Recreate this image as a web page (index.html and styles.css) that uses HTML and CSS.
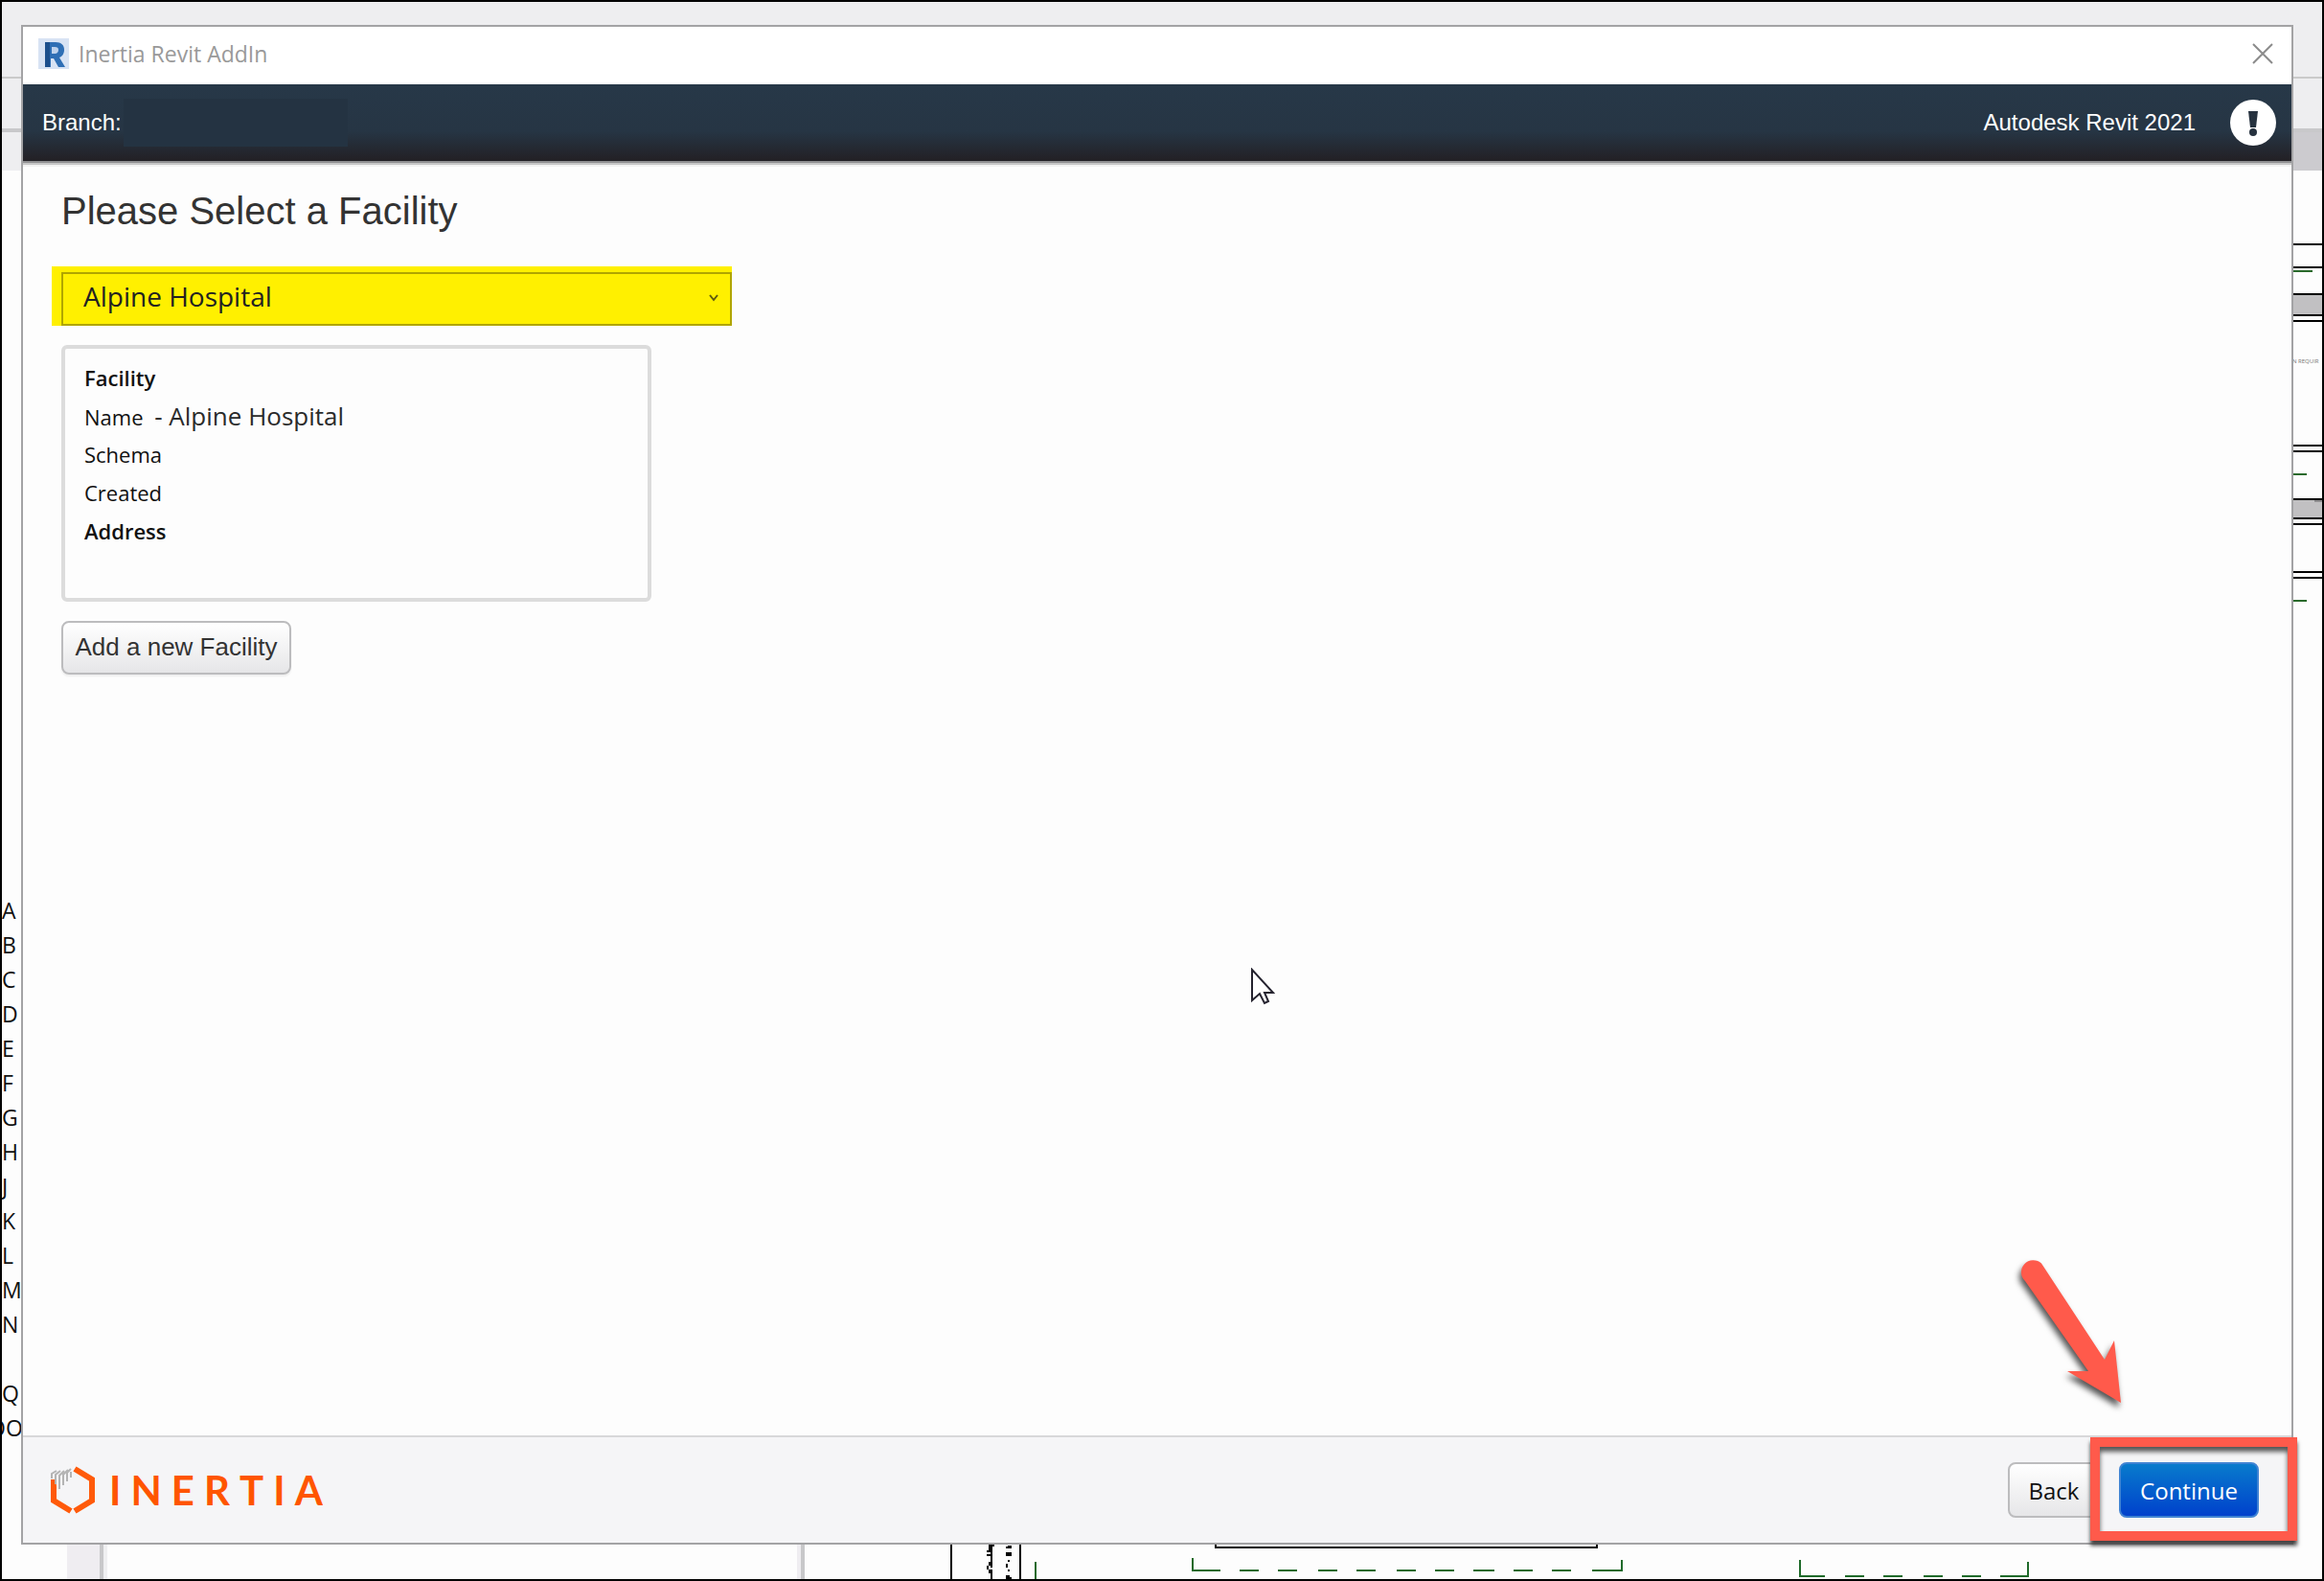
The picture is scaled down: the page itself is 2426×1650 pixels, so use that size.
FILE: index.html
```html
<!DOCTYPE html>
<html lang="en">
<head>
<meta charset="utf-8">
<title>Inertia Revit AddIn</title>
<link rel="stylesheet" href="styles.css">
</head>
<body>
<div class="desktop">
  <div class="ribbon ribbon-top"></div>
  <div class="ribbon ribbon-mid"></div>
  <div class="ribbon ribbon-low"></div>
  <ul class="sheet-list">
    <li>A</li><li>B</li><li>C</li><li>D</li><li>E</li><li>F</li><li>G</li><li>H</li><li>J</li><li>K</li><li>L</li><li>M</li><li>N</li><li></li><li>Q</li><li class="clipped">OO</li>
  </ul>
  <svg class="drawing-right" width="32" height="480" viewBox="0 0 32 480" aria-hidden="true">
    <path fill="#c1c0c2" d="M0 138h32v20H0zM0 352h32v20H0z"/>
    <path fill="#8f8e90" d="M24 352h8v2h-8z"/>
    <path stroke="#000" stroke-width="2" d="M0 85h32M0 109h32M0 137h32M0 159h32M0 165h32M0 295h32M0 301h32M0 351h32M0 371h32M0 377h32M0 427h32M0 433h32"/>
    <path stroke="#2a6a2c" stroke-width="2" d="M0 113h22M0 325h16M0 457h16"/>
    <text class="note" x="1" y="209">N REQUIR</text>
  </svg>
  <svg class="drawing-bottom" width="2422" height="38" viewBox="2 1610 2422 38" aria-hidden="true">
    <path fill="#efedf1" d="M70 1610h34v38H70zM832 1610h4v38h-4z"/>
    <path fill="#c8c8ca" d="M104 1610h4v38h-4zM836 1610h4v38h-4z"/>
    <path fill="#efeff1" d="M108 1610h4v38h-4z"/>
    <path fill="none" stroke="#000" stroke-width="2" d="M993 1610v38M1065 1610v38M1269 1610v5h398v-5"/>
    <path d="M1032 1610h4v2h2v2h-2v12h-2v-8h-2zM1030 1618h4v2h-4zM1030 1622h4v2h-4zM1034 1626h2v8h-2zM1032 1630h2v4h-2zM1030 1634h2v4h-2zM1032 1638h4v10h-2v-6h-2zM1034 1634h2v2h-2z"/>
    <path d="M1050 1610h6v2h-6zM1050 1614h2v2h-2zM1052 1613h4v3h-4zM1050 1620h6v4h-6zM1052 1628h2v2h-2zM1050 1632h2v4h-2zM1052 1638h2v2h-2zM1050 1644h4v2h2v2h-6z"/>
    <path fill="none" stroke="#1f6a2a" stroke-width="2" d="M1081 1630v18M1245 1626v13h29M1294 1639h20M1334 1639h20M1376 1639h20M1416 1639h20M1458 1639h20M1498 1639h20M1538 1639h22M1580 1639h20M1620 1639h20M1662 1639h31v-11M1879 1628v17h26M1926 1645h20M1966 1645h20M2008 1645h20M2048 1645h20M2088 1645h29v-15"/>
  </svg>

  <main class="window">
    <header class="titlebar">
      <svg class="app-icon" width="32" height="32" viewBox="0 0 32 32" aria-hidden="true">
        <path fill="#d8e3f4" d="M0 0h32v32H0z"/>
        <path fill="#2f6fb5" d="M7 4h11c6 0 9 3 9 8 0 4-2 7-5 8l6 10h-7l-5-9h-3v9H7z"/>
        <path fill="#1c4f8c" d="M7 4h5v26H7z"/>
        <path fill="#bfd2ec" d="M14 9h3c3 0 4 1 4 3s-1 4-4 4h-3z"/>
      </svg>
      <span class="title">Inertia Revit AddIn</span>
      <button class="close" aria-label="Close">
        <svg width="22" height="22" viewBox="0 0 22 22"><path d="M1 1l20 20M21 1L1 21" stroke="#8b8b8b" stroke-width="2"/></svg>
      </button>
    </header>
    <div class="navbar">
      <span class="branch">Branch:</span>
      <span class="branch-value"></span>
      <span class="product">Autodesk Revit 2021</span>
      <button class="alert" aria-label="Notifications">
        <svg width="48" height="48" viewBox="0 0 48 48"><circle cx="24" cy="24" r="24" fill="#fff"/><path fill="#26323f" d="M19 12h10l-2 17h-6z"/><circle cx="24" cy="34" r="4" fill="#26323f"/></svg>
      </button>
    </div>
    <section class="content">
      <h1><label for="facility">Please Select a Facility</label></h1>
      <div class="highlight">
        <select id="facility"><option>Alpine Hospital</option></select>
        <svg class="chevron" width="12" height="10" viewBox="0 0 12 10" aria-hidden="true"><path d="M2 2l4 5 4-5" fill="none" stroke="#5f5a10" stroke-width="2"/></svg>
      </div>
      <div class="card">
        <p class="strong">Facility</p>
        <p>Name <span class="facility-name">- Alpine Hospital</span></p>
        <p>Schema</p>
        <p>Created</p>
        <p class="strong">Address</p>
      </div>
      <button class="button add">Add a new Facility</button>
    </section>
    <footer class="footer">
      <div class="brand">
        <svg width="48" height="50" viewBox="0 0 48 50" aria-hidden="true">
          <path fill="none" stroke="#ff5a0a" stroke-width="6" d="M26 3l18 11v22L26 47M22 47L4 36V14"/>
          <path fill="#f5f5f7" d="M6 8h12v8L7 22z"/>
          <path fill="none" stroke="#b4b4b4" stroke-width="2" d="M2 13V8l5-3M6 19V9l5-4M10 24V10l5-5M14 20V9l5-5M18 16V7l4-4M22 12V6"/>
        </svg>
        <span class="wordmark"><i>I</i><i>N</i><i>E</i><i>R</i><i>T</i><i>I</i><i>A</i></span>
      </div>
      <div class="actions">
        <button class="button back">Back</button>
        <div class="callout-anchor">
          <button class="button primary">Continue</button>
          <div class="callout"></div>
          <svg class="arrow" width="130" height="180" viewBox="0 0 130 180" aria-hidden="true">
            <path fill="#ff5a4b" d="M18 30a10 10 0 0 1 17-18.500L101 112l10-20 7 65-56-33h22z"/>
          </svg>
        </div>
      </div>
    </footer>
  </main>
  <svg class="cursor" width="26" height="40" viewBox="0 0 26 40" aria-hidden="true"><path fill="#fff" stroke="#25232f" stroke-width="2" d="M2 2v32l8-7 5 10 4-2-4-9h9z"/></svg>
</div>
</body>
</html>
```
FILE: styles.css
```css
* { box-sizing: border-box; }
body { margin: 0; font-family: "Open Sans", "Noto Sans", sans-serif; font-size: 22px; color: #111; }
button, select { font: inherit; }

.desktop {
  position: relative;
  display: flex;
  flex-direction: column;
  min-height: 100vh;
  padding: 24px 30px 36px 20px;
  border: 2px solid #000;
  background: #fdfdfd;
  overflow: hidden;
}
.ribbon { position: absolute; left: 0; right: 0; background: #eeeef0; }
.ribbon-top { top: 0; height: 80px; border-bottom: 2px solid #cacaca; }
.ribbon-mid { top: 80px; height: 56px; border-bottom: 4px solid #c8c8ca; }
.ribbon-low { top: 132px; height: 44px; background: linear-gradient(90deg, #eeeef0 50%, #cccbcf 50%); border-top: 4px solid #c8c8ca; }
.sheet-list { position: absolute; left: 0; top: 930px; margin: 0; padding: 0; list-style: none; font-size: 23px; line-height: 36px; }
.sheet-list li { height: 36px; }
.sheet-list .clipped { margin-left: -14px; }
.drawing-right { position: absolute; right: 0; top: 168px; }
.note { fill: #777; font-size: 6px; }
.drawing-bottom { position: absolute; left: 0; bottom: 0; }

.window {
  position: relative;
  flex: 1;
  display: flex;
  flex-direction: column;
  border: 2px solid #a3a3a5;
  background: #fdfdfd;
}
.titlebar { display: flex; align-items: center; gap: 10px; height: 60px; padding: 0 19px 4px 16px; background: #fff; }
.title { flex: 1; color: #999; font-size: 23px; line-height: 30px; }
.close, .alert { display: flex; padding: 0; border: 0; background: none; }
.navbar {
  display: flex;
  align-items: center;
  height: 84px;
  padding: 0 16px 2px 20px;
  border-bottom: 2px solid #c6c6c6;
  box-shadow: inset 0 -2px #8f8f91, 0 2px #f2f2f2;
  background: linear-gradient(#273848, #263544 60%, #232126 96%);
  color: #fff;
  font-family: "Liberation Sans", Arial, sans-serif;
  font-size: 24px;
}
.branch-value { width: 234px; height: 50px; margin-left: 2px; background: #243342; }
.product { margin-left: auto; margin-right: 36px; }

.content { flex: 1; display: flex; flex-direction: column; align-items: flex-start; padding: 24px 30px; }
h1 { margin: 0; padding-left: 10px; color: #333; font: 400 40px/48px "Liberation Sans", Arial, sans-serif; }
.highlight { position: relative; display: flex; width: 710px; height: 62px; margin-top: 34px; padding: 6px 0 0 10px; background: #fff000; }
select { appearance: none; flex: 1; padding: 0 20px 6px 21px; border: 2px solid #b0a500; border-radius: 0; background: transparent; color: #222; font-size: 28px; }
.chevron { position: absolute; right: 13px; top: 28px; }
.card { width: 616px; height: 268px; margin: 20px 0 0 10px; padding: 10px 20px; border: 4px solid #dcdcdc; border-radius: 6px; line-height: 40px; }
.card p { height: 40px; margin: 0; }
.strong { font-weight: 600; }
.facility-name { margin-left: 6px; color: #2b2b2b; font-size: 26px; }
.button { height: 58px; border: 2px solid #bcbcbe; border-radius: 8px; background: linear-gradient(#fff, #e6e6e8); color: #111; font-size: 24px; white-space: nowrap; }
.add { width: 240px; height: 56px; margin: 20px 0 0 10px; padding: 0 0 2px; color: #333; font-family: "Liberation Sans", Arial, sans-serif; font-size: 26px; box-shadow: 0 2px 2px #eee; }

.footer { display: flex; align-items: center; justify-content: space-between; height: 112px; padding: 0 34px 0 28px; border-top: 2px solid #d8d8da; background: #f5f5f7; }
.brand { display: flex; align-items: center; gap: 14px; }
.wordmark { display: flex; gap: 10px; color: #ff5500; font: 700 42px/48px Lato, sans-serif; }
.wordmark i { font-style: normal; }
.actions { display: flex; align-items: center; gap: 20px; }
.back { width: 96px; padding: 0; }
.callout-anchor { position: relative; display: flex; }
.primary { width: 146px; padding: 0; border-color: #3f83d3; background: linear-gradient(#087bcc, #0041cc); color: #fff; }
.callout { position: absolute; left: -30px; top: -26px; width: 216px; height: 108px; border: 10px solid #ff5a4b; box-shadow: 0 5px 4px #444, inset 0 5px 5px #555; pointer-events: none; }
.arrow { position: absolute; right: 132px; bottom: 97px; filter: drop-shadow(-2px 5px 3px #555); pointer-events: none; }
.cursor { position: absolute; left: 1303px; top: 1008px; }
```
